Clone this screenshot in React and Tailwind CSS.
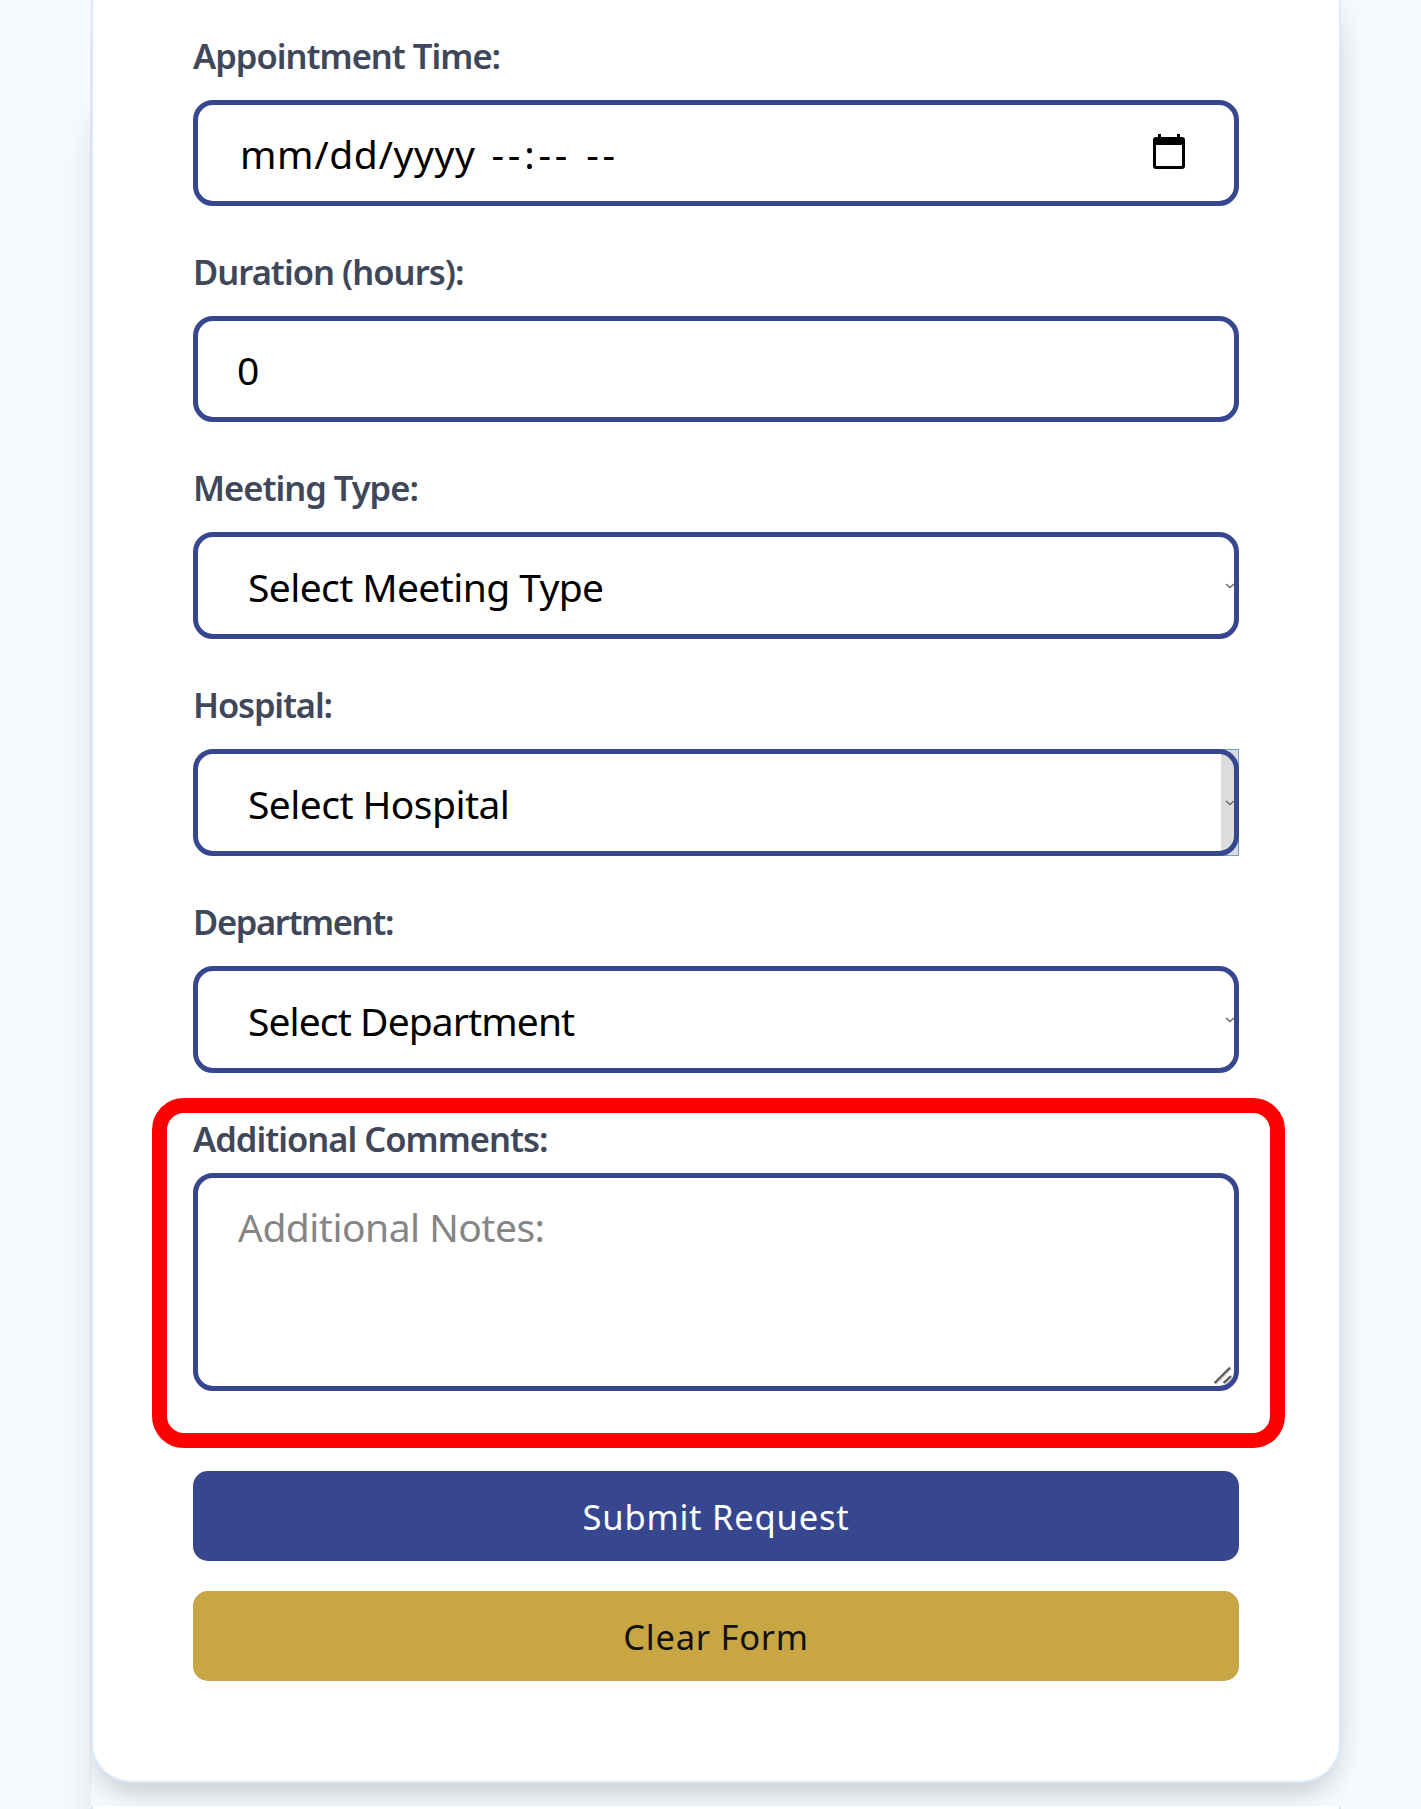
import React from "react";

const FIELD = "flex w-full shrink-0 rounded-[20px] border-[5px] border-[#37478f] bg-white text-[39px] font-normal text-black";

function Label({ children, className }) {
  return (
    <label className={`block h-12 whitespace-nowrap text-[34.5px] font-semibold leading-[48px] text-[#3f475a] ${className}`}>
      {children}
    </label>
  );
}

function Chevron() {
  return (
    <svg className="mr-[-1px] h-[6px] w-[10px] shrink-0" viewBox="0 0 10 6" fill="none" stroke="#6b6b6b" strokeWidth="1.5">
      <path d="M1 1 L5 4.6 L9 1" />
    </svg>
  );
}

function SelectField({ label, labelTracking, value, tracking, highlighted }) {
  return (
    <div className="mb-[42px]">
      <Label className={`mb-[20px] ${labelTracking}`}>{label}</Label>
      <div className="relative">
        {highlighted && <div className="absolute inset-y-0 right-0 w-[18px] border border-l-0 border-[#649fd8] bg-[#dddddd]" />}
        <div className={`${FIELD} relative h-[107px] items-center justify-between pl-[50px] ${highlighted ? "bg-[linear-gradient(to_right,#fff_1023px,#ddd_1023px)]" : ""}`}>
          <span className={`whitespace-nowrap pt-[2px] leading-[54px] ${tracking}`}>{value}</span>
          <Chevron />
        </div>
      </div>
    </div>
  );
}

export default function App() {
  return (
    <div className="relative h-[1809px] w-[1421px] overflow-hidden bg-[#f5fbff] font-['Noto_Sans',sans-serif]">
      <div className="absolute inset-y-0 left-0 w-[91px] overflow-hidden">
        <div className="absolute -bottom-24 left-[93px] top-[104px] w-[1246px] rounded-[40px] shadow-[0_0_40px_rgba(20,20,0,0.11)]" />
      </div>
      <div className="relative ml-[90px] h-[1806px] w-[1277px] overflow-hidden pl-px">
        <main className="flex h-[1783px] w-[1250px] flex-col rounded-b-[40px] border-2 border-t-0 border-[#d9eafc] bg-white px-[100px] pt-[32px] shadow-[0_0_36px_rgba(30,0,20,0.07),0_18px_30px_-8px_rgba(30,0,10,0.16)]">
          <div className="mb-[42px]">
            <Label className="mb-[20px] tracking-[-0.99px]">Appointment Time:</Label>
            <div className={`${FIELD} h-[106px] items-center justify-between pl-[42px] pr-[46px]`}>
              <span className="whitespace-pre pt-[2px] leading-[54px]">
                <span className="tracking-[0.6px]">mm/dd/yyyy</span>
                <span className="ml-[16px] tracking-[3.8px]">--:--</span>
                <span className="ml-[15px] tracking-[3.8px]">--</span>
              </span>
              <svg className="mb-[2px] h-[40px] w-[38px]" viewBox="0 0 38 40">
                <path fillRule="evenodd" fill="#000" d="M8 2h3v3h16V2h3v3h2a3 3 0 0 1 3 3v26a3 3 0 0 1-3 3H6a3 3 0 0 1-3-3V8a3 3 0 0 1 3-3h2zM6 13v21h26V13z" />
              </svg>
            </div>
          </div>
          <div className="mb-[42px]">
            <Label className="mb-[20px] tracking-[-0.97px]">Duration (hours):</Label>
            <div className={`${FIELD} h-[106px] items-center pl-[39px]`}>
              <span className="pt-[1px] leading-[54px]">0</span>
            </div>
          </div>
          <SelectField label="Meeting Type:" labelTracking="tracking-[-1px]" value="Select Meeting Type" tracking="tracking-[-0.6px]" />
          <SelectField label="Hospital:" labelTracking="tracking-[-1.15px]" value="Select Hospital" tracking="tracking-[-0.56px]" highlighted />
          <SelectField label="Department:" labelTracking="tracking-[-1.36px]" value="Select Department" tracking="tracking-[-0.9px]" />
          <div className="relative mb-[80px]">
            <div className="pointer-events-none absolute -left-[41px] -top-[17px] h-[350px] w-[1133px] rounded-[32px] border-[15px] border-[#ff0000]" />
            <Label className="mb-[10px] tracking-[-0.99px]">Additional Comments:</Label>
            <div className={`${FIELD} h-[218px] justify-between pl-[40px] pt-[22px]`}>
              <span className="whitespace-nowrap leading-[54px] tracking-[-0.52px] text-[#858585]">Additional Notes:</span>
              <svg className="h-[20px] w-[21px] self-end" viewBox="0 0 21 20" fill="none">
                <path d="M2.5 18 L18 2.5 M12 18 L19 11.5" stroke="#c4c4c4" strokeWidth="2" />
                <path d="M1.5 17 L17 1.5 M10.5 17 L18 10" stroke="#555" strokeWidth="2" />
              </svg>
            </div>
          </div>
          <button className="mb-[30px] h-[90px] shrink-0 rounded-[15px] bg-[#37478f] pt-[2px] text-[34.5px] leading-[48px] tracking-[0.78px] text-white">Submit Request</button>
          <button className="h-[90px] shrink-0 rounded-[15px] bg-[#c9a644] pt-[2px] text-[34.5px] leading-[48px] tracking-[0.75px] text-[#111]">Clear Form</button>
        </main>
      </div>
      <div className="relative ml-[91px] h-[3px] w-[1250px] border-x-2 border-[#d0e8fc] bg-white" />
    </div>
  );
}
